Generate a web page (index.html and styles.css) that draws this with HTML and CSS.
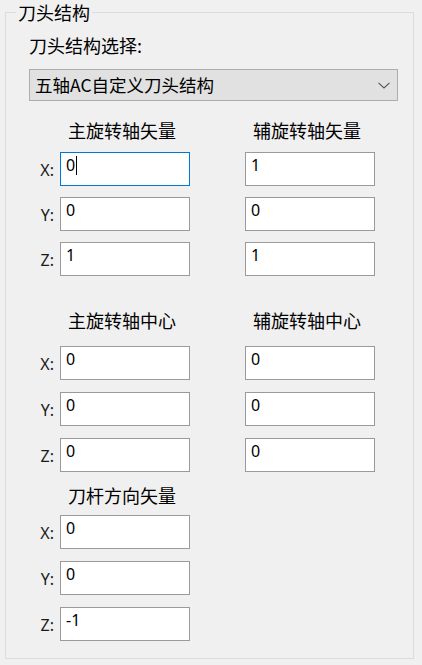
FILE: index.html
```html
<!DOCTYPE html>
<html lang="zh-CN">
<head>
<meta charset="utf-8">
<title>刀头结构</title>
<link rel="stylesheet" href="styles.css">
</head>
<body>
<fieldset class="group">
  <legend class="group-title">刀头结构</legend>
  <div class="group-body">
    <div class="field-label">刀头结构选择:</div>
    <div class="combo">
      <span class="combo-text">五轴AC自定义刀头结构</span>
      <svg class="combo-arrow" width="12" height="7" viewBox="0 0 12 7"><path d="M0.5 0.8 L6 6 L11.5 0.8" fill="none" stroke="#555" stroke-width="1.1"/></svg>
    </div>

    <div class="section s1">
      <div class="head c1">主旋转轴矢量</div>
      <div class="head c2">辅旋转轴矢量</div>
      <span class="axis">X:</span><div class="tb focus">0<span class="caret"></span></div><div class="tb c2">1</div>
      <span class="axis">Y:</span><div class="tb">0</div><div class="tb c2">0</div>
      <span class="axis">Z:</span><div class="tb">1</div><div class="tb c2">1</div>
    </div>

    <div class="section s2">
      <div class="head c1">主旋转轴中心</div>
      <div class="head c2">辅旋转轴中心</div>
      <span class="axis">X:</span><div class="tb">0</div><div class="tb c2">0</div>
      <span class="axis">Y:</span><div class="tb">0</div><div class="tb c2">0</div>
      <span class="axis">Z:</span><div class="tb">0</div><div class="tb c2">0</div>
    </div>

    <div class="section s3">
      <div class="head c1">刀杆方向矢量</div>
      <span class="axis">X:</span><div class="tb">0</div>
      <span class="axis">Y:</span><div class="tb">0</div>
      <span class="axis">Z:</span><div class="tb">-1</div>
    </div>
  </div>
</fieldset>
</body>
</html>
```

FILE: styles.css
```css
* { box-sizing: border-box; }

html, body {
  margin: 0;
  padding: 0;
  background: #f0f0f0;
}

body {
  width: 422px;
  height: 665px;
  overflow: hidden;
  font-family: "Noto Sans", "Noto Sans CJK SC", sans-serif;
  color: #000;
}

.group {
  margin: 0 0 0 5px;
  padding: 9px 0 17px 0;
  width: 409px;
  border: 1px solid #dcdcdc;
  min-width: 0;
}

.group-title {
  margin-left: 10px;
  padding: 0 2px;
  font-family: "Noto Sans CJK SC", sans-serif;
  font-size: 18px;
  line-height: 24px;
}

.group-body {
  padding-left: 23px;
}

.field-label {
  font-family: "Noto Sans CJK SC", sans-serif;
  font-size: 18px;
  line-height: 24px;
}

.combo {
  margin-top: 12px;
  width: 369px;
  height: 32px;
  border: 1px solid #adadad;
  background: #e1e1e1;
  display: flex;
  align-items: center;
  justify-content: space-between;
  padding: 0 7px 0 5px;
}

.combo-text {
  font-family: "Noto Sans CJK SC", sans-serif;
  font-size: 17.5px;
  line-height: 24px;
}

.combo-arrow { display: block; }

.section {
  display: grid;
  grid-template-columns: 31px 130px 55px 130px;
  grid-template-rows: var(--hrow) repeat(3, 34px);
  row-gap: var(--gap);
}

.s1 { margin-top: 17px; --hrow: 23px; --gap: 11px; }
.s2 { margin-top: 32px; --hrow: 26px; --gap: 12px; }
.s3 { margin-top: 11px; --hrow: 20px; --gap: 12px; }

.head {
  align-self: start;
  font-family: "Noto Sans CJK SC", sans-serif;
  font-size: 18px;
  line-height: 24px;
  height: 24px;
  padding-left: 8px;
  white-space: nowrap;
}

.head.c1 { grid-column: 2; }
.head.c2 { grid-column: 4; }

.axis {
  grid-column: 1;
  align-self: center;
  text-align: right;
  padding-right: 6px;
  padding-top: 2px;
  font-size: 16px;
  line-height: 22px;
  color: #1a1a1a;
}

.tb {
  grid-column: 2;
  height: 34px;
  border: 1px solid #9a9a9a;
  background: #fff;
  padding: 1px 5px;
  font-size: 16px;
  line-height: 22px;
  white-space: nowrap;
}

.tb.c2 { grid-column: 4; }

.tb.focus { border-color: #0078d7; }

.caret {
  display: inline-block;
  width: 1px;
  height: 19px;
  background: #000;
  vertical-align: -4px;
  margin-left: 1px;
}
```
